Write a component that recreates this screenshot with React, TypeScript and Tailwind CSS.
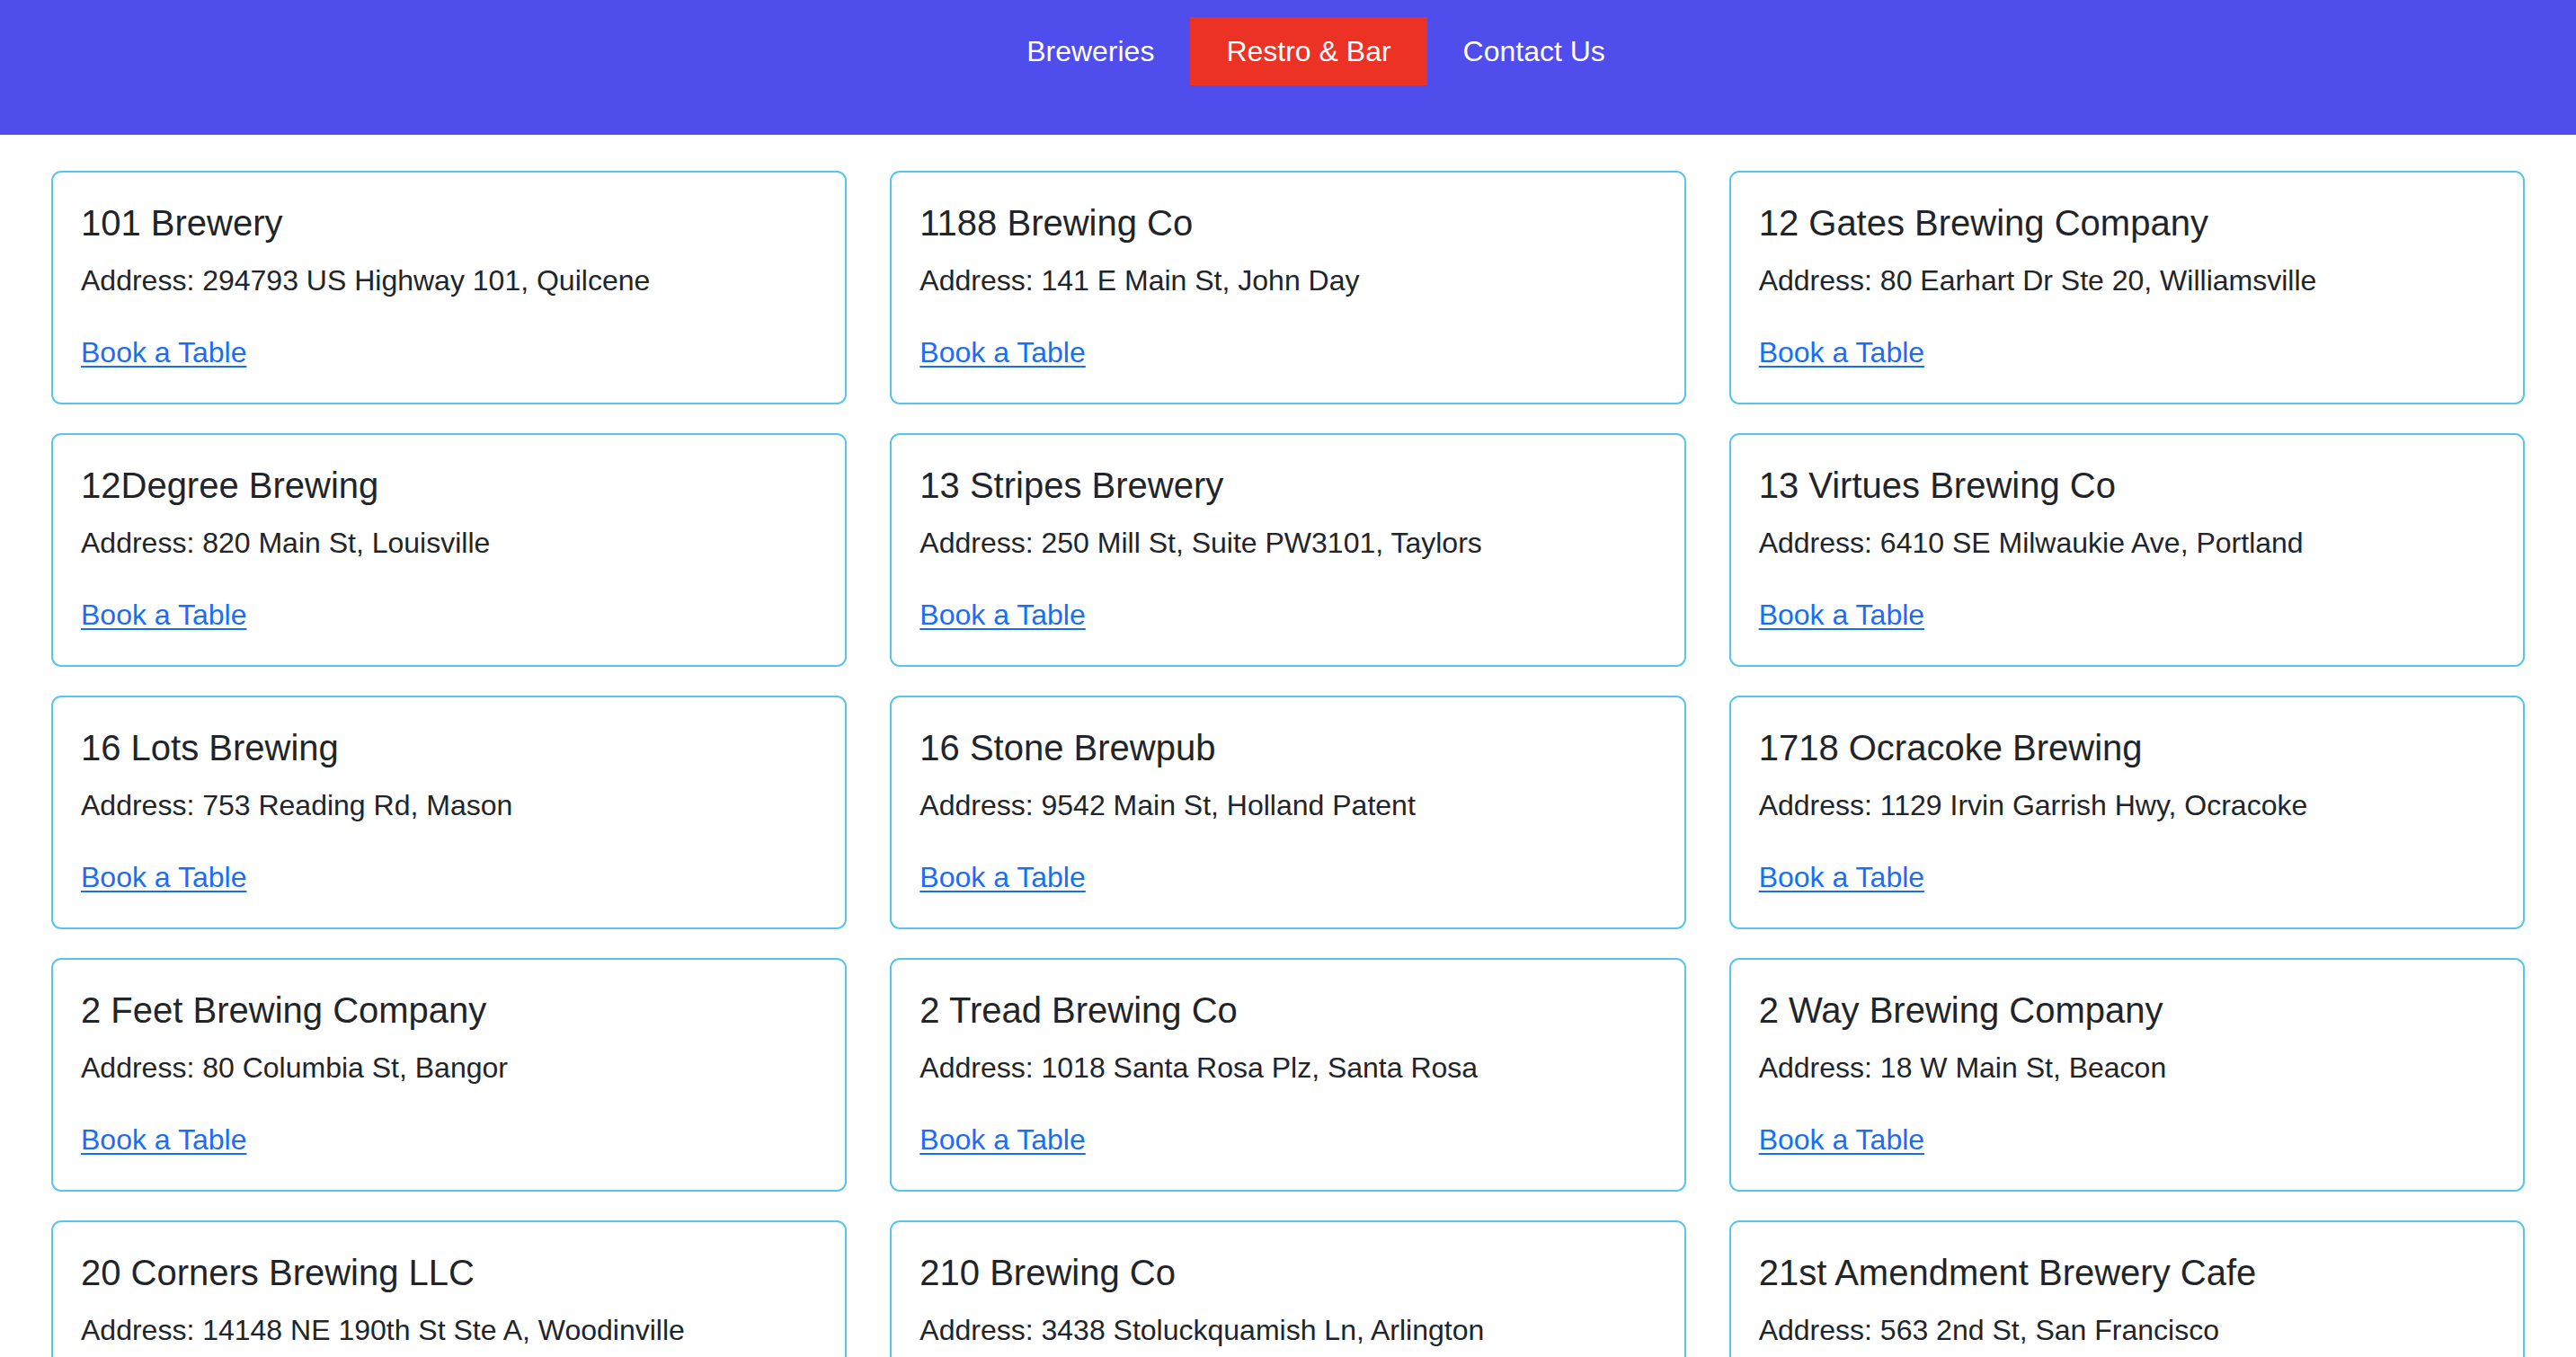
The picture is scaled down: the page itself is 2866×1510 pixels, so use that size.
const breweries = [
  { name: "101 Brewery", address: "294793 US Highway 101, Quilcene" },
  { name: "1188 Brewing Co", address: "141 E Main St, John Day" },
  { name: "12 Gates Brewing Company", address: "80 Earhart Dr Ste 20, Williamsville" },
  { name: "12Degree Brewing", address: "820 Main St, Louisville" },
  { name: "13 Stripes Brewery", address: "250 Mill St, Suite PW3101, Taylors" },
  { name: "13 Virtues Brewing Co", address: "6410 SE Milwaukie Ave, Portland" },
  { name: "16 Lots Brewing", address: "753 Reading Rd, Mason" },
  { name: "16 Stone Brewpub", address: "9542 Main St, Holland Patent" },
  { name: "1718 Ocracoke Brewing", address: "1129 Irvin Garrish Hwy, Ocracoke" },
  { name: "2 Feet Brewing Company", address: "80 Columbia St, Bangor" },
  { name: "2 Tread Brewing Co", address: "1018 Santa Rosa Plz, Santa Rosa" },
  { name: "2 Way Brewing Company", address: "18 W Main St, Beacon" },
  { name: "20 Corners Brewing LLC", address: "14148 NE 190th St Ste A, Woodinville" },
  { name: "210 Brewing Co", address: "3438 Stoluckquamish Ln, Arlington" },
  { name: "21st Amendment Brewery Cafe", address: "563 2nd St, San Francisco" },
];

const links = [
  { label: "Breweries", active: false },
  { label: "Restro & Bar", active: true },
  { label: "Contact Us", active: false },
];

export default function App() {
  return (
    <div
      className="h-screen overflow-hidden bg-white text-[#212529]"
      style={{ fontFamily: '"Liberation Sans", Arial, sans-serif' }}
    >
      <header className="h-[150px] bg-[#4f4dec]">
        <nav className="flex justify-center pl-[62px] pt-[19px]">
          {links.map((link) => (
            <a
              key={link.label}
              href="#"
              className={`px-[40px] py-[14px] text-[32px] leading-[48px] text-white ${
                link.active ? "bg-[#ec3224]" : ""
              }`}
            >
              {link.label}
            </a>
          ))}
        </nav>
      </header>

      {/* cards */}
      <main className="grid grid-cols-3 gap-x-[48px] gap-y-[32px] px-[57px] pt-[40px]">
        {breweries.map((b) => (
          <div
            key={b.name}
            className="rounded-[11px] border-2 border-[#58c5ec] px-[31px] py-[32px]"
          >
            <h5 className="mb-[16px] text-[40px] leading-[48px]">{b.name}</h5>
            <p className="mb-[32px] text-[32px] leading-[48px]">
              Address: {b.address}
            </p>
            <a
              href="#"
              className="text-[32px] leading-[48px] text-[#1a6ef5] underline decoration-[2px] underline-offset-[4px]"
            >
              Book a Table
            </a>
          </div>
        ))}
      </main>
    </div>
  );
}
